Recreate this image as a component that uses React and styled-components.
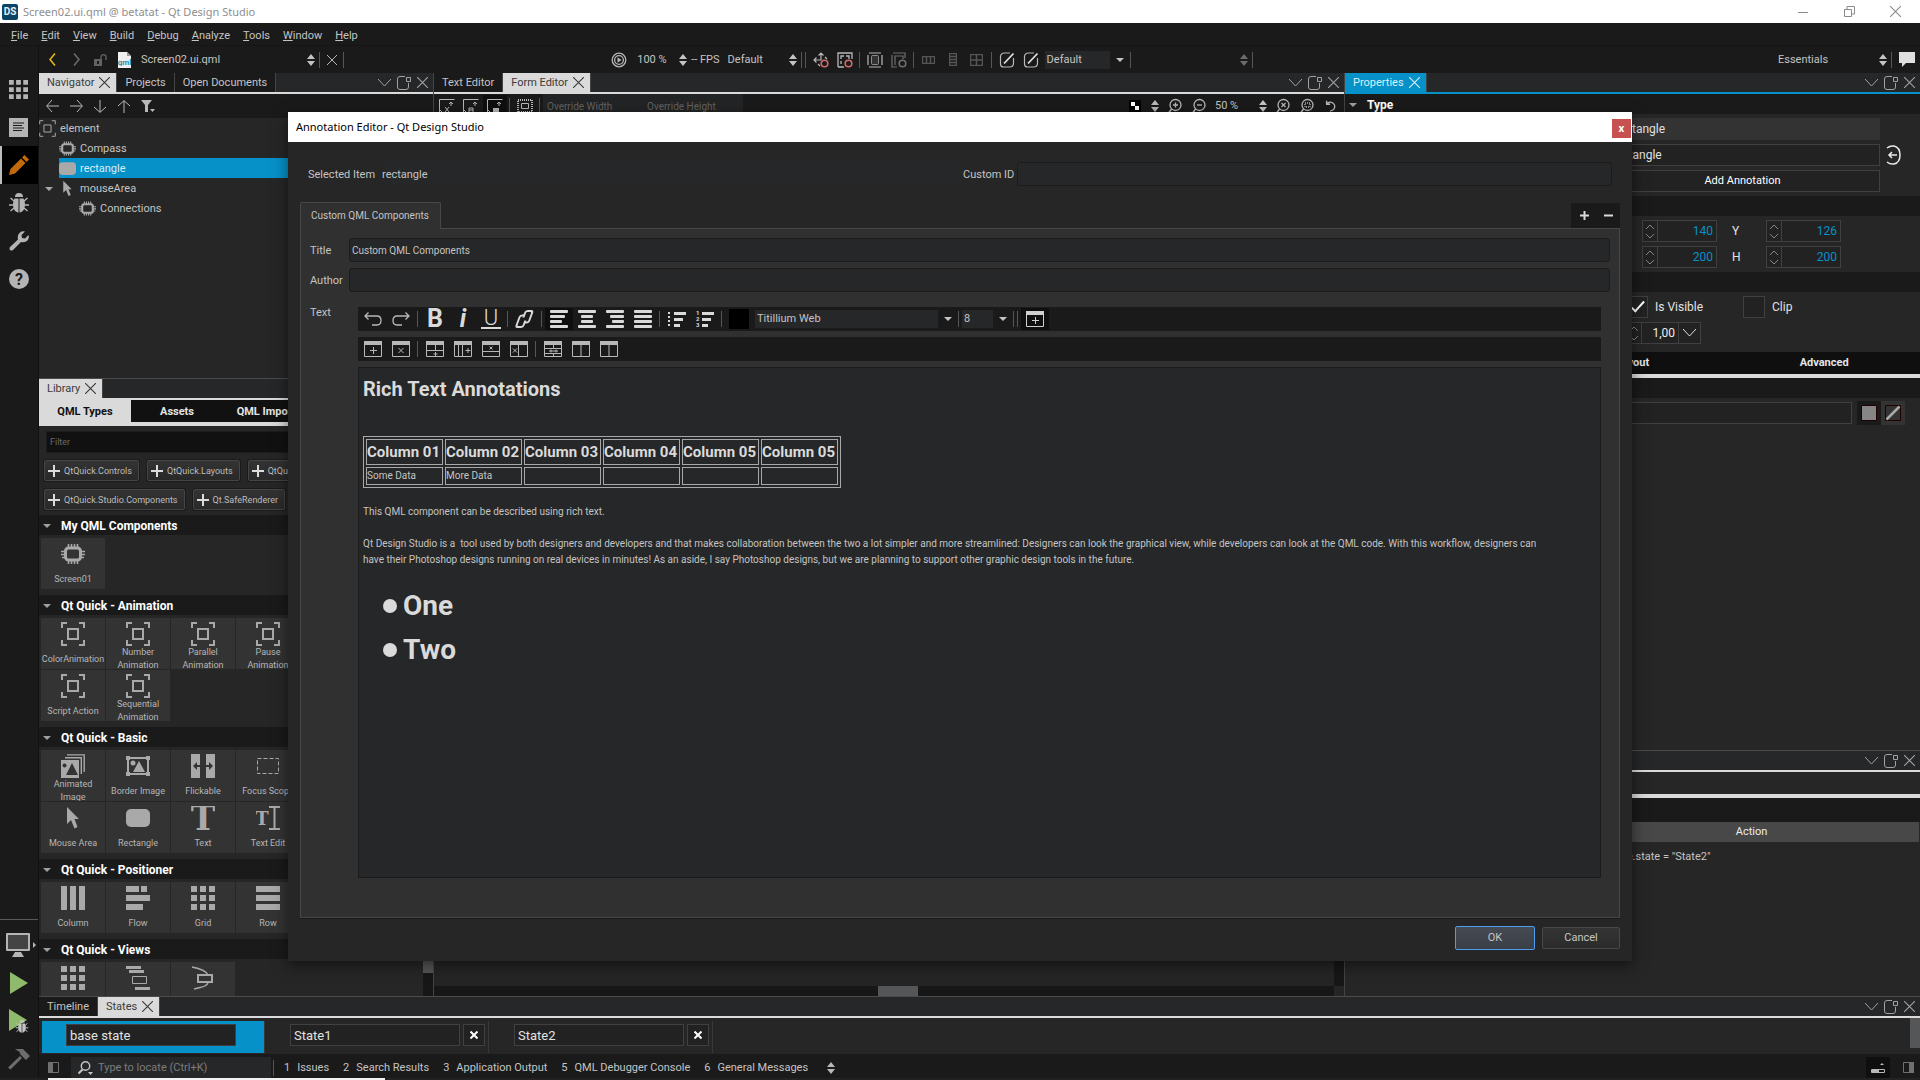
import React from 'react';
import styled, { createGlobalStyle, css } from 'styled-components';

const GlobalStyle = createGlobalStyle`
  :root {
    --panel: #262626;
    --dark: #1a1a1a;
    --bar: #262728;
    --light: #dadada;
    --text: #c4c4c4;
    --icon: #a9a9a9;
    --line: #434445;
    --accent: #0691c9;
  }
  * {
    box-sizing: border-box;
  }
  body {
    margin: 0;
    background: var(--dark);
    color: var(--text);
    font-family: Roboto, sans-serif;
    font-size: 11px;
    line-height: 16px;
  }
  button,
  input,
  select {
    font: inherit;
    color: inherit;
    margin: 0;
    padding: 0;
    border: 0;
    border-radius: 0;
    background: none;
    min-width: 0;
  }
  a {
    color: inherit;
    text-decoration: none;
  }
  svg {
    display: block;
    flex: none;
  }
`;

/* ---------- icons ---------- */

const Icon = ({ size = 16, w, h, box = 16, children, ...rest }) => (
  <svg
    width={w || size}
    height={h || size}
    viewBox={`0 0 ${w ? w : box} ${h ? h : box}`}
    fill="currentColor"
    aria-hidden="true"
    {...rest}
  >
    {children}
  </svg>
);

const Line = ({ d, sw = 1, ...rest }) => (
  <path d={d} fill="none" stroke="currentColor" strokeWidth={sw} {...rest} />
);

const UpDown = () => (
  <Icon w={8} h={12}>
    <path d="M4 0l4 5H0zM4 12l4-5H0z" />
  </Icon>
);
const Down = ({ w = 8 }) => (
  <svg width={w} height={w / 2} viewBox="0 0 8 4" fill="currentColor" aria-hidden="true">
    <path d="M0 0h8L4 4z" />
  </svg>
);
const Cross = ({ size = 10 }) => (
  <Icon size={size} box={10}>
    <Line d="M0 0l10 10M10 0L0 10" />
  </Icon>
);
const ChevronDown = () => (
  <Icon w={13} h={8}>
    <Line d="M0 0l6.500 7L13 0" />
  </Icon>
);
const PopOut = () => (
  <Icon w={14} h={14}>
    <Line d="M8 .5H3Q.5.5.5 3v8q0 2.500 2.500 2.500h6q2.500 0 2.500-2.500V7M9.500 1.500h4v4h-4z" />
  </Icon>
);
const Chip = ({ size = 24 }) => (
  <Icon size={size} box={24}>
    <rect x="4.500" y="6" width="15" height="12" rx="3" fill="none" stroke="currentColor" strokeWidth="3" />
    <Line
      sw={1.600}
      d="M7.500 2v4M10.500 2v4M13.500 2v4M16.500 2v4M7.500 18v4M10.500 18v4M13.500 18v4M16.500 18v4M0 9.500h4M0 12.500h4M1 15.500h3M20 9.500h4M20 12.500h4M20 15.500h3"
    />
  </Icon>
);
const Frame = ({ size = 24, sw = 2 }) => (
  <Icon size={size} box={24}>
    <Line sw={sw} d="M1 6V1h5M18 1h5v5M23 18v5h-5M6 23H1v-5M7 7h10v10H7z" />
  </Icon>
);
const Cursor = ({ size = 24 }) => (
  <Icon size={size} box={24}>
    <path d="M6 1l12 12h-4.500l3 8-3 1.500-3.500-8.500-4 4z" />
  </Icon>
);
const RoundRect = ({ size = 24 }) => (
  <Icon size={size} box={24}>
    <rect y="3" width="24" height="18" rx="5" />
  </Icon>
);
const GridIcon = ({ size = 24 }) => (
  <Icon size={size} box={24}>
    <path d="M0 0h6v6H0zM9 0h6v6H9zM18 0h6v6h-6zM0 9h6v6H0zM9 9h6v6H9zM18 9h6v6h-6zM0 18h6v6H0zM9 18h6v6H9zM18 18h6v6h-6z" />
  </Icon>
);
const AnimatedImage = () => (
  <Icon size={24} box={24}>
    <Line sw={1.400} d="M4 3.700h16.300V20M6 .9h17.200V18" />
    <path fillRule="evenodd" d="M0 6h18v18H0zM3.500 9.500a2 2 0 1 0 .1 0zM11 9l-6 12h12z" />
  </Icon>
);
const BorderImage = () => (
  <Icon size={24} box={24}>
    <Line sw={2} d="M2 4h20v16H2z" />
    <path d="M0 2h4v4H0zM20 2h4v4h-4zM0 18h4v4H0zM20 18h4v4h-4zM7 18l6-11 6 11z" />
    <circle cx="7" cy="9" r="2.500" />
  </Icon>
);
const Flickable = () => (
  <Icon size={24} box={24}>
    <path fillRule="evenodd" d="M0 0h9v24H0zM2 12l4-4v3h3v2H6v3zM15 0h9v24h-9zM22 12l-4-4v3h-3v2h3v3z" />
  </Icon>
);
const FocusScope = () => (
  <Icon size={24} box={24}>
    <rect x="1.500" y="4.500" width="21" height="15" fill="none" stroke="currentColor" strokeDasharray="4 2" />
  </Icon>
);
const TextIcon = () => (
  <Icon size={24} box={24}>
    <text x="12" y="24" textAnchor="middle" fontFamily="DejaVu Serif" fontWeight="700" fontSize="33">T</text>
  </Icon>
);
const TextEditIcon = () => (
  <Icon size={24} box={24}>
    <text x="6" y="19" textAnchor="middle" fontFamily="DejaVu Serif" fontWeight="700" fontSize="18">T</text>
    <Line sw={2} d="M18.500 1v22M13 1h11M13 23h11" />
  </Icon>
);
const ColumnIcon = () => (
  <Icon size={24} box={24}>
    <path d="M0 0h6v24H0zM9 0h6v24H9zM18 0h6v24h-6z" />
  </Icon>
);
const FlowIcon = () => (
  <Icon size={24} box={24}>
    <path d="M0 0h13v6H0zM15 0h6v6h-6zM0 9h24v6H0zM0 18h17v6H0z" />
  </Icon>
);
const RowIcon = () => (
  <Icon size={24} box={24}>
    <path d="M0 0h24v6H0zM0 9h24v6H0zM0 18h24v6H0z" />
  </Icon>
);
const ListViewIcon = () => (
  <Icon size={24} box={24}>
    <path d="M0 0h15v3H0zM3 4h15v3H3zM9 21h15v3H9z" />
    <Line d="M6.500 10.500h14v7h-14z" />
  </Icon>
);
const PathViewIcon = () => (
  <Icon size={24} box={24}>
    <Line sw={1.500} d="M1 1c5 1 14 3 16 8M17 17c-2 4-6 4-10 5l-4 1" />
    <Line sw={2} d="M7 9h14v7H7z" />
  </Icon>
);
const Bug = ({ size = 20 }) => (
  <Icon size={size} box={20}>
    <path d="M6 4a4 4 0 0 1 8 0zM9.500 5.500v14C6 19 4 16 4 11q0-3 1.500-5.500zM10.500 5.500h4Q16 8 16 11c0 5-2 8-5.500 8.500z" />
    <Line sw={1.500} d="M5 8L1.500 5M4 12H0M5 15l-3.500 3M15 8l3.500-3M16 12h4M15 15l3.500 3" />
  </Icon>
);
const BoxButton = ({ children }) => (
  <Icon w={18} h={16}>
    <path d="M0 0h18v4H0z" />
    <Line d="M.5.5h17v15H.5z" />
    {children}
  </Icon>
);
const Lines = ({ rows }) => (
  <Icon w={18} h={20}>
    {rows.map(([x, width], i) => (
      <rect key={i} x={x} y={1 + i * 5} width={width} height="3" rx="1" />
    ))}
  </Icon>
);
const ZoomIcon = ({ d, dash }) => (
  <Icon w={16} h={16}>
    <circle cx="8.500" cy="7" r="5.500" fill="none" stroke="currentColor" strokeWidth="1.300" />
    <Line sw={1.500} d="M4.500 11L2 14.500" />
    <Line sw={1.300} d={d} strokeDasharray={dash} />
  </Icon>
);
const EditBox = () => (
  <Icon size={16}>
    <Line sw={1.200} d="M14.500 6v5q0 4-4 4h-6q-3 0-3-3V5q0-4 4-4H11" />
    <Line sw={1.800} d="M5 11.500L14.500 1.500" stroke="#e0e0e0" />
  </Icon>
);

/* ---------- shell ---------- */

const Page = styled.div`
  position: relative;
  display: flex;
  flex-direction: column;
  height: 100vh;
  overflow: hidden;
`;

const TitleBar = styled.header`
  display: flex;
  align-items: center;
  height: 23px;
  padding: 0 2px;
  gap: 5px;
  background: #fff;
  color: #8e8e8e;
  font: 11px/22px 'Noto Sans', sans-serif;
`;

const AppLogo = styled.span`
  width: 16px;
  height: 16px;
  border-radius: 2px;
  background: #0c4466;
  color: #e4f1f8;
  font: 700 10px/16px Roboto, sans-serif;
  text-align: center;
`;

const WindowButtons = styled.div`
  display: flex;
  align-items: center;
  margin-left: auto;

  button {
    display: flex;
    justify-content: center;
    width: 46px;
    color: #8a8a8a;
  }
`;

const MenuBar = styled.nav`
  display: flex;
  align-items: center;
  gap: 13px;
  height: 23px;
  padding: 3px 11px 0;
  border-bottom: 1px solid #151515;
`;

const Body = styled.div`
  display: flex;
  flex: 1;
  min-height: 0;
`;

const Rail = styled.nav`
  display: flex;
  flex-direction: column;
  width: 39px;
  padding-top: 24px;
  border-right: 1px solid #111;

  hr {
    width: 38px;
    margin: auto 0 6px;
    border: 0;
    border-top: 1px solid #5a5a5a;
  }
`;

const RailButton = styled.button`
  display: flex;
  align-items: center;
  justify-content: center;
  height: 38px;
  padding-right: 1px;
  color: ${(p) => p.$color || '#b4b4b4'};
  ${(p) =>
    p.$active &&
    css`
      background: #000;
      box-shadow: inset 2px 0 #bdbdbd;
    `}
`;

const Work = styled.div`
  display: flex;
  flex-direction: column;
  flex: 1;
  min-width: 0;
`;

const Toolbar = styled.div`
  display: flex;
  align-items: center;
  flex: none;
  height: ${(p) => p.$h || 24}px;
  padding: 0 1px;
  background: var(--dark);
`;

const Spacer = styled.span`
  flex: ${(p) => p.$grow || 1};
`;

const Gap = styled.span`
  flex: none;
  width: ${(p) => p.$w || 15}px;
`;

const ToolButton = styled.button`
  display: flex;
  align-items: center;
  justify-content: center;
  flex: none;
  width: ${(p) => p.$w || 24}px;
  height: 22px;
  color: ${(p) => p.$color || '#b8b8b8'};
  background: ${(p) => (p.$on ? '#0f0f0f' : 'none')};
`;

const ComboBox = styled.span`
  display: flex;
  align-items: center;
  flex: none;
  width: ${(p) => p.$w}px;
  color: ${(p) => p.$color || 'inherit'};

  select {
    flex: 1;
    height: 18px;
    padding-left: ${(p) => p.$pad || 2}px;
    appearance: none;
    outline: 0;
    background: ${(p) => (p.$filled ? '#262728' : 'none')};
  }
  svg {
    margin: 0 ${(p) => (p.$filled ? 6 : 4)}px;
  }
`;

const Sep = styled.span`
  width: 1px;
  height: 16px;
  margin: 0 3px 0 2px;
  background: #565656;

  & + &,
  ${ComboBox} + & {
    margin-left: 0;
  }
`;

const Combo = ({ label, value, arrow, ...rest }) => (
  <ComboBox {...rest}>
    <select aria-label={label} defaultValue={value}>
      <option>{value}</option>
    </select>
    {arrow === 'down' ? <Down /> : <UpDown />}
  </ComboBox>
);

const Docks = styled.main`
  display: grid;
  grid-template-columns: 395px minmax(0, 1fr) 575px;
  flex: 1;
  min-height: 0;
`;

const DockColumn = styled.div`
  display: flex;
  flex-direction: column;
  min-width: 0;
  min-height: 0;
  border-right: 1px solid var(--line);

  &:last-child {
    border-right: 0;
  }
`;

const Panel = styled.section`
  display: flex;
  flex-direction: column;
  flex: ${(p) => p.$grow || 1} 1 0;
  min-height: 0;
  overflow: hidden;
  background: var(--panel);
`;

const DockBarBox = styled.div`
  display: flex;
  flex: none;
  height: ${(p) => (p.$lined ? 22 : 21)}px;
  background: var(--bar);
  border-bottom: 2px solid ${(p) => (p.$accent ? 'var(--accent)' : 'var(--light)')};
  ${(p) => p.$lined && 'border-top: 1px solid #4b4b4b;'}
`;

const DockTab = styled.button`
  display: flex;
  align-items: center;
  gap: 5px;
  padding: 0 8px;
  background: var(--dark);
  border-right: 1px solid var(--line);
  ${(p) =>
    p.$active &&
    css`
      padding-right: 6px;
      color: #3a3a3a;
      background: var(--light);
    `}
  ${(p) =>
    p.$accent &&
    css`
      color: #dceef6;
      background: var(--accent);
    `}
`;

const DockActions = styled.div`
  display: flex;
  align-items: center;
  gap: 6px;
  margin-left: auto;
  padding-right: 5px;

  button {
    color: #a2a2a2;
  }
`;

const DockBar = ({ tabs = [], active, accent, lined }) => (
  <DockBarBox $accent={accent} $lined={lined}>
    {tabs.map((tab) => (
      <DockTab key={tab} $active={tab === active} $accent={accent}>
        {tab}
        {tab === active && <Cross size={11} />}
      </DockTab>
    ))}
    <DockActions>
      <button aria-label="Dock menu"><ChevronDown /></button>
      <button aria-label="Detach"><PopOut /></button>
      <button aria-label="Close"><Cross size={11} /></button>
    </DockActions>
  </DockBarBox>
);

/* ---------- navigator ---------- */

const Tree = styled.ul`
  margin: 0;
  padding: 0;
  list-style: none;
`;

const TreeRow = styled.li`
  display: flex;
  align-items: center;
  gap: 4px;
  height: 20px;
  margin-left: ${(p) => p.$depth * 20}px;
  padding-top: 1px;
  color: ${(p) => (p.$selected ? '#d9edf6' : 'var(--text)')};
  background: ${(p) => (p.$selected ? 'var(--accent)' : 'none')};

  svg {
    color: var(--icon);
  }
`;

const Branch = styled.span`
  display: flex;
  justify-content: center;
  width: 20px;
  margin: 0 -4px 0 -20px;
`;

/* ---------- library ---------- */

const LibraryTabs = styled.div`
  display: flex;
  flex: none;
  height: 26px;
  background: #111;
  border-bottom: 4px solid var(--light);
`;

const LibraryTab = styled.button`
  width: 92px;
  padding-top: 1px;
  font-weight: 700;
  white-space: nowrap;
  color: ${(p) => (p.$active ? '#111' : '#e4e4e4')};
  background: ${(p) => (p.$active ? 'var(--light)' : 'none')};
`;

const LibraryBody = styled.div`
  display: flex;
  flex: 1;
  min-height: 0;
`;

const LibraryScroll = styled.div`
  flex: 1;
  overflow: hidden;
`;

const Filter = styled.input`
  display: block;
  width: calc(100% - 14px);
  height: 22px;
  margin: 5px 7px 7px;
  padding: 0 3px;
  font-size: 9px;
  background: #111;
  border: 1px solid #1c1c1c;

  &::placeholder {
    color: #6a6a6a;
  }
`;

const Chips = styled.div`
  display: flex;
  flex-wrap: wrap;
  gap: 8px;
  margin: 0 5px 5px;
`;

const ImportChip = styled.button`
  display: flex;
  align-items: center;
  gap: 4px;
  height: 21px;
  padding: 0 6px 0 3px;
  font-size: 9px;
  white-space: nowrap;
  color: #bdbdbd;
  background: linear-gradient(#333, #292929);
  border: 1px solid #454545;
  border-radius: 2px;
  box-shadow: 0 0 0 1px #1b1b1b;

  svg {
    color: #dcdcdc;
  }
`;

const SectionHead = styled.h2`
  display: flex;
  align-items: center;
  gap: 10px;
  flex: none;
  height: 20px;
  margin: 0;
  padding: 1px 0 0 4px;
  font-size: 12px;
  font-weight: 700;
  color: #fff;
  background: var(--dark);

  svg {
    color: #a0a0a0;
  }
`;

const Tiles = styled.div`
  display: flex;
  flex-wrap: wrap;
  gap: 1px;
  padding: 3px 0 6px 2px;
`;

const Tile = styled.button`
  display: flex;
  flex-direction: column;
  align-items: center;
  width: 64px;
  height: 51px;
  padding-top: 4px;
  overflow: hidden;
  color: var(--icon);
  background: #333;
`;

const TileLabel = styled.span`
  display: flex;
  align-items: center;
  justify-content: center;
  flex: none;
  height: 26px;
  font-size: 9px;
  line-height: 13px;
  color: #b6b6b6;
`;

const ScrollTrack = styled.div`
  width: 10px;
  background: #171717;

  span {
    display: block;
    width: 10px;
    height: ${(p) => p.$size};
    background: #555657;
  }
`;

/* ---------- form editor ---------- */

const Overrides = styled.div`
  display: flex;
  align-self: stretch;
  background: #232425;

  input {
    width: 100px;
    padding: 2px 4px 0;
    font-size: 10px;
  }
  input::placeholder {
    color: #636363;
  }
`;

const Canvas = styled.div`
  display: grid;
  grid-template: minmax(0, 1fr) 10px / minmax(0, 1fr) 10px;
  flex: 1;
  background: #252525;
`;

const HScroll = styled.div`
  display: flex;
  justify-content: center;
  background: #171717;

  span {
    width: 40px;
    margin-left: 28px;
    background: #555657;
  }
`;

/* ---------- properties ---------- */

const PropBody = styled.div`
  display: flex;
  flex-direction: column;
  gap: 4px;
  padding: 4px ${(p) => p.$right || 18}px 4px 16px;
`;

const PropRow = styled.div`
  display: flex;
  align-items: center;
  height: 22px;
  padding-left: ${(p) => p.$indent || 0}px;
  font-size: 12px;
  color: #e2e2e2;

  label {
    flex: none;
    width: ${(p) => p.$label || 14}px;
  }
`;

const field = css`
  height: 22px;
  border: 1px solid #404040;
  background: #222;
`;

const PropInput = styled.input`
  ${field}
  flex: 1;
  padding: 0 6px;
  ${(p) => p.$plain && 'background: #333; border-color: #333;'}
`;

const PropButton = styled.button`
  ${field}
  flex: 1;
  font-size: 11px;
  color: #fff;
`;

const ExportButton = styled.button`
  flex: none;
  width: 18px;
  margin-left: 4px;
  color: #ececec;
`;

const SpinBox = styled.span`
  ${field}
  display: flex;
  flex: none;
  width: 75px;

  span {
    display: flex;
    flex-direction: column;
    align-items: center;
    justify-content: space-around;
    width: 15px;
    color: #8a8289;
    border-right: 1px solid #404040;
  }
  input {
    flex: 1;
    padding-right: 3px;
    text-align: right;
    color: ${(p) => (p.$white ? '#eee' : 'var(--accent)')};
  }
  > button {
    width: 22px;
    padding-left: 4px;
    border-left: 1px solid #404040;
  }
`;

const Spin = ({ id, value, label, white, children }) => (
  <SpinBox $white={white}>
    <span>
      <Icon w={8} h={5}><Line d="M0 5l4-4 4 4" /></Icon>
      <Icon w={8} h={5}><Line d="M0 0l4 4 4-4" /></Icon>
    </span>
    <input id={id} aria-label={label} defaultValue={value} inputMode="numeric" />
    {children}
  </SpinBox>
);

const Check = styled.input`
  ${field}
  display: grid;
  place-items: center;
  flex: none;
  width: 22px;
  margin-right: 7px;
  appearance: none;

  &:checked::after {
    content: '';
    width: 5px;
    height: 12px;
    margin-bottom: 4px;
    border: solid #fff;
    border-width: 0 2px 2px 0;
    transform: rotate(42deg);
  }
`;

const PropTabs = styled.div`
  display: grid;
  grid-template-columns: repeat(3, 1fr);
  height: 26px;
  margin-top: 4px;
  background: #0f0f0f;
  border-bottom: 4px solid var(--light);

  button {
    font-weight: 700;
    color: #e4e4e4;
  }
`;

const TabStrip = styled.div`
  flex: none;
  height: 26px;
  border-bottom: 4px solid var(--light);
`;

const Band = styled.div`
  flex: none;
  height: ${(p) => p.$h || 20}px;
  background: var(--dark);
`;

const FillToggle = styled.span`
  display: flex;
  width: 48px;
  height: 24px;
  background: #333;

  button {
    display: flex;
    align-items: center;
    justify-content: center;
    width: 24px;
  }
  button:first-child {
    background: #1a1a1a;
  }
`;

const Actions = styled.table`
  width: calc(100% - 1px);
  border-collapse: collapse;
  table-layout: fixed;

  th {
    height: 20px;
    padding: 0;
    font-weight: 400;
    color: #eee;
    background: #484848;
  }
  td {
    height: 30px;
    padding: 0 3px;
  }
`;

/* ---------- states and status ---------- */

const StateList = styled.div`
  display: flex;
  gap: 2px;
  flex: none;
  height: 36px;
  padding: 3px 0 1px 3px;
  background: var(--panel);
`;

const StateCell = styled.div`
  display: flex;
  gap: 3px;
  width: 222px;
  padding: 3px 0 0 24px;
  background: ${(p) => (p.$active ? 'var(--accent)' : 'none')};
  box-shadow: 1px 0 #393939;

  input {
    ${field}
    width: 170px;
    padding: 0 3px;
    font-size: 13px;
    color: #e2e2e2;
  }
  button {
    ${field}
    display: flex;
    align-items: center;
    justify-content: center;
    width: 22px;
    color: #fff;
  }
`;

const StateScroll = styled.div`
  width: 10px;
  height: 30px;
  margin: -3px 0 0 auto;
  background: #555657;
`;

const StatusBar = styled.footer`
  display: flex;
  align-items: center;
  flex: none;
  height: 24px;
  padding-top: 3px;
  background: var(--dark);
`;

const Locator = styled.label`
  display: flex;
  align-items: center;
  gap: 5px;
  align-self: flex-end;
  width: 200px;
  height: 21px;
  padding-left: 7px;
  background: #262728;

  input {
    flex: 1;
  }
  input::placeholder {
    color: #7c7c7c;
  }
`;

const Output = styled.button`
  margin-left: ${(p) => p.$gap || 14}px;
  white-space: nowrap;

  b {
    margin-right: 7px;
    font-weight: 400;
  }
`;

const TaskEdge = styled.div`
  flex: none;
  height: 2px;
  padding-left: 48px;
  background: #222;

  span {
    display: block;
    width: 18%;
    height: 2px;
    background: #f2f2f2;
  }
`;

/* ---------- annotation dialog ---------- */

const Dialog = styled.section`
  position: absolute;
  inset: 112px 15% 119px;
  display: flex;
  flex-direction: column;
  background: var(--panel);
  box-shadow: 0 4px 14px rgba(0, 0, 0, 0.5);
`;

const DialogTitle = styled.header`
  display: flex;
  align-items: center;
  justify-content: space-between;
  flex: none;
  height: 30px;
  padding: 0 1px 0 8px;
  color: #000;
  background: #fff;

  h1 {
    margin: 0;
    font: 11px/16px 'Noto Sans', sans-serif;
  }
  button {
    width: 19px;
    height: 19px;
    margin-top: 3px;
    color: #fff;
    background: #c75050;
    font: 700 10px/17px 'Open Sans', sans-serif;
  }
`;

const DialogBody = styled.div`
  display: flex;
  flex-direction: column;
  flex: 1;
  min-height: 0;
  padding: 20px 12px 11px;
`;

const IdRow = styled.div`
  display: grid;
  grid-template-columns: 74px minmax(0, 581px) 54px minmax(0, 595px);
  align-items: center;
  padding: 0 8px;
  margin-bottom: 16px;
`;

const FieldLabel = styled.label`
  padding-top: 1px;
`;

const EditField = styled.input`
  width: 100%;
  height: 24px;
  padding: 0 2px;
  font-size: 10px;
  background: #262728;
  border: 1px solid #1c1c1c;
  border-radius: 3px;
  ${(p) =>
    p.readOnly &&
    css`
      padding: 1px 0 0;
      font-size: 11px;
      border: 0;
    `}
`;

const TabRow = styled.div`
  display: flex;
  align-items: flex-end;
  justify-content: space-between;
  height: 26px;
`;

const PageTab = styled.button`
  position: relative;
  height: 27px;
  margin-bottom: -1px;
  padding: 0 11px 0 10px;
  font-size: 10px;
  background: #303030;
  border: 1px solid #474747;
  border-bottom: 0;
  border-radius: 2px 2px 0 0;
`;

const PageButtons = styled.div`
  display: flex;
  align-items: center;
  height: 25px;
  padding-left: 1px;
  background: var(--dark);
`;

const TabPage = styled.div`
  display: grid;
  grid-template-columns: 39px minmax(0, 1fr);
  grid-template-rows: 24px 24px minmax(0, 1fr);
  row-gap: 6px;
  align-items: center;
  flex: 1;
  min-height: 0;
  padding: 9px;
  background: #303030;
  border: 1px solid #474747;
  box-shadow: 0 1px #181818;
`;

const TextLabel = styled.span`
  align-self: start;
  padding-top: 7px;
`;

const RichText = styled.div`
  display: flex;
  flex-direction: column;
  gap: 6px;
  align-self: stretch;
  padding: 9px 9px 30px;
`;

const Letter = styled.span`
  font-size: 25px;
  line-height: 22px;
  color: var(--light);
  font-weight: 700;
  font-style: ${(p) => p.$slant || 'normal'};
`;

const Underlined = styled.span`
  width: 20px;
  border-bottom: 2px solid var(--light);
  font-size: 22px;
  line-height: 18px;
  font-weight: 300;
  color: var(--light);
`;

const Swatch = styled.span`
  width: 20px;
  height: 20px;
  background: #000;
`;

const Document = styled.article`
  flex: 1;
  padding: 7px 4px;
  overflow: hidden;
  background: #262728;
  border: 1px solid #1b1b1b;
  font-size: 10px;

  h2 {
    margin: 0 0 33px;
    font-size: 20px;
    line-height: 28px;
    color: var(--light);
  }
  p {
    margin: 16px 44px 16px 0;
  }
  ul {
    margin: 16px 0 0;
    padding: 0;
    list-style: none;
  }
  li {
    display: flex;
    align-items: center;
    gap: 6px;
    padding-left: 20px;
    font-size: 28px;
    font-weight: 700;
    line-height: 44px;
    color: var(--light);
  }
  li::before {
    content: '';
    width: 14px;
    height: 14px;
    border-radius: 50%;
    background: var(--light);
  }
`;

const DataTable = styled.table`
  border: 1px solid #a8a8a8;
  border-spacing: 2px;

  th,
  td {
    width: 77px;
    height: 18px;
    padding: 0;
    border: 1px solid #a8a8a8;
    line-height: 16px;
    text-align: left;
    white-space: nowrap;
  }
  th {
    height: 26px;
    font-size: 15px;
    color: var(--light);
  }
`;

const DialogFooter = styled.footer`
  display: flex;
  align-items: center;
  justify-content: flex-end;
  gap: 7px;
  padding-top: 8px;
`;

const DialogButton = styled.button`
  width: ${(p) => (p.$primary ? 80 : 78)}px;
  height: ${(p) => (p.$primary ? 24 : 22)}px;
  color: #c6c6c6;
  background: ${(p) => (p.$primary ? 'linear-gradient(#454a53, #3a3f47)' : 'linear-gradient(#343434, #2b2b2b)')};
  border: 1px solid ${(p) => (p.$primary ? '#4c9df0' : '#484848')};
  border-radius: 2px;
`;

/* ---------- data ---------- */

const menus = ['File', 'Edit', 'View', 'Build', 'Debug', 'Analyze', 'Tools', 'Window', 'Help'];

const imports = ['QtQuick.Controls', 'QtQuick.Layouts', 'QtQuick.Extras', 'QtQuick.Studio.Components', 'Qt.SafeRenderer'];

const library = [
  ['My QML Components', [['Screen01', Chip]]],
  [
    'Qt Quick - Animation',
    [
      ['ColorAnimation', Frame],
      ['Number Animation', Frame],
      ['Parallel Animation', Frame],
      ['Pause Animation', Frame],
      ['Property Animation', Frame],
      ['Script Action', Frame],
      ['Sequential Animation', Frame],
    ],
  ],
  [
    'Qt Quick - Basic',
    [
      ['Animated Image', AnimatedImage],
      ['Border Image', BorderImage],
      ['Flickable', Flickable],
      ['Focus Scope', FocusScope],
      ['Image', BorderImage],
      ['Mouse Area', Cursor],
      ['Rectangle', RoundRect],
      ['Text', TextIcon],
      ['Text Edit', TextEditIcon],
    ],
  ],
  [
    'Qt Quick - Positioner',
    [
      ['Column', ColumnIcon],
      ['Flow', FlowIcon],
      ['Grid', GridIcon],
      ['Row', RowIcon],
    ],
  ],
  [
    'Qt Quick - Views',
    [
      ['Grid View', GridIcon, true],
      ['List View', ListViewIcon, true],
      ['Path View', PathViewIcon, true],
    ],
  ],
];

const outputs = [
  [1, 'Issues'],
  [2, 'Search Results'],
  [3, 'Application Output'],
  [5, 'QML Debugger Console'],
  [6, 'General Messages'],
];

const columns = ['Column 01', 'Column 02', 'Column 03', 'Column 04', 'Column 05', 'Column 05'];

const alignments = [
  ['Align left', [[0, 18], [0, 15], [0, 12], [0, 18]]],
  ['Center', [[0, 18], [3, 12], [3, 12], [0, 18]]],
  ['Align right', [[0, 18], [4, 14], [6, 12], [0, 18]]],
  ['Justify', [[0, 18], [0, 18], [0, 18], [0, 18]]],
];

const tableTools = [
  ['Insert row', 'M0 9.500h18M9.500 4v5M9.500 11v4M7.500 13h4'],
  ['Insert column', 'M4.500 4v12M8.500 4v12M11.500 9.500h5M14 7v5'],
  ['Remove row', 'M0 10.500h18M7.500 5.500l3 3M10.500 5.500l-3 3'],
  ['Remove column', 'M8.500 4v12M3 7.500l4 4M7 7.500l-4 4'],
];

const mergeTools = [
  ['Merge cells', 'M0 7.500h18M0 12.500h18M9.500 4v4M9.500 12v4M5 10h9M7 8.500v3M12 8.500v3'],
  ['Split row', 'M9 4v12'],
  ['Split column', 'M9 4v12'],
];

/* ---------- parts ---------- */

function MainToolbar() {
  return (
    <Toolbar $h={27}>
      <ToolButton aria-label="Back" $color="#e8bc1c">
        <Icon w={7} h={13}><Line sw={1.500} d="M6 .5l-5 6 5 6" /></Icon>
      </ToolButton>
      <ToolButton aria-label="Forward" $color="#6c6c6c">
        <Icon w={7} h={13}><Line sw={1.500} d="M1 .5l5 6-5 6" /></Icon>
      </ToolButton>
      <ToolButton aria-label="Unlocked" $color="#636363">
        <Icon w={13} h={12}>
          <path fillRule="evenodd" d="M0 5h8v7H0zM3 7v3h2V7z" />
          <Line sw={1.300} d="M7 6V3q0-2.300 2.500-2.300T12 3v3" />
        </Icon>
      </ToolButton>
      <ToolButton aria-label="QML file">
        <Icon w={15} h={16}>
          <path d="M1 0h9l4 4v12H1z" fill="#f0f0f0" />
          <path d="M10 0v4h4z" fill="#9a9a9a" />
          <text x="7.500" y="13" textAnchor="middle" fontSize="8" fontWeight="700" fill="#1a8fa8">qml</text>
        </Icon>
      </ToolButton>
      <Combo label="Open document" value="Screen02.ui.qml" $w={183} $pad={5} />
      <Sep />
      <ToolButton aria-label="Close document" $w={18}><Cross /></ToolButton>
      <Sep />
      <Spacer />
      <ToolButton aria-label="Run preview">
        <Icon size={16}>
          <circle cx="8" cy="8" r="6.800" fill="none" stroke="currentColor" strokeWidth="1.300" />
          <circle cx="8" cy="8" r="4.400" fill="none" stroke="currentColor" strokeWidth="1.300" />
          <path d="M6.500 5.200L10.500 8l-4 2.800z" />
        </Icon>
      </ToolButton>
      <Combo label="Preview size" value="100 %" $w={60} $pad={6} />
      <span>-- FPS</span>
      <Combo label="Language" value="Default" $w={81} $pad={8} />
      <Sep />
      <Sep />
      <ToolButton aria-label="Reset position">
        <Icon size={16}>
          <Line sw={1.200} d="M8 1v7M1 8h7M5.500 3.500L8 1l2.500 2.500M3.500 5.500L1 8l2.500 2.500M7 14l-2-2M12 5l2 2" />
          <circle cx="11.500" cy="11.500" r="3.300" fill="none" stroke="#d46a6a" strokeWidth="1.600" />
        </Icon>
      </ToolButton>
      <ToolButton aria-label="Reset size">
        <Icon size={16}>
          <Line sw={1.300} d="M1 15V1h14v6M1 15h6M4 7V4h3M9 4h3v3M4 9v3" />
          <circle cx="11.500" cy="11.500" r="3.300" fill="none" stroke="#d46a6a" strokeWidth="1.600" />
        </Icon>
      </ToolButton>
      <Sep />
      <ToolButton aria-label="Fill parent">
        <Icon size={16}>
          <Line sw={1.200} d="M2 1h12M2 15h12M1 3v10M15 3v10" />
          <rect x="4.500" y="3.500" width="7" height="9" rx="1" fill="#333" stroke="#8e8e8e" />
        </Icon>
      </ToolButton>
      <ToolButton aria-label="Reset anchors" $color="#6f6f6f">
        <Icon size={16}>
          <Line sw={1.200} d="M2 1h12v5M1 3v12h5M4 13V4h8v3" />
          <circle cx="11.500" cy="11.500" r="3.300" fill="none" stroke="currentColor" strokeWidth="1.600" />
        </Icon>
      </ToolButton>
      <Sep />
      <ToolButton aria-label="Row layout" $color="#555">
        <Icon w={13} h={8}><Line d="M.5.5h12v7H.5zM4.500 0v8M8.500 0v8" sw={1.500} /></Icon>
      </ToolButton>
      <ToolButton aria-label="Column layout" $color="#555">
        <Icon w={8} h={13}><Line d="M.5.5h7v12h-7zM0 3.500h8M0 6.500h8M0 9.500h8" sw={1.500} /></Icon>
      </ToolButton>
      <ToolButton aria-label="Grid layout" $color="#555">
        <Icon w={13} h={12}><Line d="M.5.5h12v11H.5zM6.500 0v12M0 6h13" sw={1.500} /></Icon>
      </ToolButton>
      <Sep />
      <ToolButton aria-label="Edit style"><EditBox /></ToolButton>
      <ToolButton aria-label="Edit theme"><EditBox /></ToolButton>
      <Gap $w={2} />
      <Combo label="Style" value="Default" arrow="down" $filled $w={85} />
      <Sep />
      <Combo label="Backend" value="" $w={118} $color="#6c6c6c" />
      <Sep />
      <Spacer $grow={2} />
      <Combo label="Workspace" value="Essentials" $w={115} />
      <Sep />
      <ToolButton aria-label="Feedback" $color="#e0e0e0">
        <Icon w={16} h={15}><path d="M0 0h16v11H7l-4 4v-4H0z" /></Icon>
      </ToolButton>
    </Toolbar>
  );
}

function Navigator() {
  return (
    <Panel $grow={305}>
      <DockBar tabs={['Navigator', 'Projects', 'Open Documents']} active="Navigator" />
      <Toolbar>
        <ToolButton aria-label="Move left"><Icon w={13} h={12}><Line d="M6 0L.7 6 6 12M.7 6H13" /></Icon></ToolButton>
        <ToolButton aria-label="Move right"><Icon w={13} h={12}><Line d="M7 0l5.300 6L7 12M12.300 6H0" /></Icon></ToolButton>
        <ToolButton aria-label="Move down"><Icon w={12} h={13}><Line d="M0 7l6 5.300L12 7M6 12.300V0" /></Icon></ToolButton>
        <ToolButton aria-label="Move up"><Icon w={12} h={13}><Line d="M0 6L6 .7 12 6M6 .7V13" /></Icon></ToolButton>
        <ToolButton aria-label="Filter tree">
          <Icon w={14} h={12}><path d="M0 0h11L7 5v7H4V5zM9 9h5l-2.500 3z" /></Icon>
        </ToolButton>
      </Toolbar>
      <Tree>
        <TreeRow $depth={0}><Frame size={17} sw={1.400} />element</TreeRow>
        <TreeRow $depth={1}><Chip size={17} />Compass</TreeRow>
        <TreeRow $depth={1} $selected><RoundRect size={17} />rectangle</TreeRow>
        <TreeRow $depth={1}><Branch><Down /></Branch><Cursor size={17} />mouseArea</TreeRow>
        <TreeRow $depth={2}><Chip size={17} />Connections</TreeRow>
      </Tree>
    </Panel>
  );
}

function Library() {
  return (
    <Panel $grow={618}>
      <DockBar tabs={['Library']} active="Library" lined />
      <LibraryTabs>
        <LibraryTab $active>QML Types</LibraryTab>
        <LibraryTab>Assets</LibraryTab>
        <LibraryTab>QML Imports</LibraryTab>
      </LibraryTabs>
      <LibraryBody>
        <LibraryScroll>
          <Filter placeholder="Filter" aria-label="Filter" />
          <Chips>
            {imports.map((name) => (
              <ImportChip key={name}>
                <Icon w={12} h={12}><path d="M5 0h2v5h5v2H7v5H5V7H0V5h5z" /></Icon>
                {name}
              </ImportChip>
            ))}
          </Chips>
          {library.map(([title, items]) => (
            <React.Fragment key={title}>
              <SectionHead><Down />{title}</SectionHead>
              <Tiles>
                {items.map(([name, Glyph, iconOnly]) => (
                  <Tile key={name} aria-label={name}>
                    <Glyph />
                    {!iconOnly && <TileLabel>{name}</TileLabel>}
                  </Tile>
                ))}
              </Tiles>
            </React.Fragment>
          ))}
        </LibraryScroll>
        <ScrollTrack $size="96%"><span /></ScrollTrack>
      </LibraryBody>
    </Panel>
  );
}

function FormEditor() {
  const corner = 'M.5 15V1.500h15M12 4v4M10 6l2-2 2 2M3 14l-2-2';
  return (
    <Panel>
      <DockBar tabs={['Text Editor', 'Form Editor']} active="Form Editor" />
      <Toolbar>
        <ToolButton aria-label="No snapping"><Icon size={16}><Line d={corner} /><Line d="M6 9l4 5M10 9l-4 5" /></Icon></ToolButton>
        <ToolButton aria-label="Snap with anchors"><Icon size={16}><Line d={corner} /><Line d="M6 15v-5h4v5M6 12h4" /></Icon></ToolButton>
        <ToolButton aria-label="Snap" $on><Icon size={16}><Line d={corner} /><path d="M6 10h6v6H6z" /></Icon></ToolButton>
        <Sep />
        <ToolButton aria-label="Show bounds">
          <Icon size={16}>
            <rect x="1" y="2" width="14" height="12" fill="none" stroke="currentColor" strokeWidth="2" strokeDasharray="1 1" />
            <Line d="M4.500 5.500h7v5h-7z" />
          </Icon>
        </ToolButton>
        <Sep />
        <Overrides>
          <input placeholder="Override Width" aria-label="Override Width" />
          <input placeholder="Override Height" aria-label="Override Height" />
        </Overrides>
        <Spacer />
        <ToolButton aria-label="Background">
          <Icon w={12} h={12}>
            <path d="M0 0h12v12H0z" fill="#000" />
            <path d="M2 2h4v4H2zM6 6h4v4H6z" fill="#fff" />
          </Icon>
        </ToolButton>
        <ToolButton aria-label="Choose background" $w={16}><UpDown /></ToolButton>
        <ToolButton aria-label="Zoom in"><ZoomIcon d="M8.500 4.500v5M6 7h5" /></ToolButton>
        <ToolButton aria-label="Zoom out"><ZoomIcon d="M6 7h5" /></ToolButton>
        <Combo label="Zoom" value="50 %" $w={60} $pad={4} />
        <ToolButton aria-label="Fit all"><ZoomIcon d="M6.500 5l4 4M10.500 5l-4 4" /></ToolButton>
        <ToolButton aria-label="Fit selection"><ZoomIcon d="M6 5h5v4H6z" dash="1 1" /></ToolButton>
        <ToolButton aria-label="Reset view">
          <Icon size={14}><Line sw={1.500} d="M3 2v4h4M3 6q3-4 7-1.500T11 12l-4 2" /></Icon>
        </ToolButton>
      </Toolbar>
      <Canvas>
        <span />
        <ScrollTrack />
        <HScroll><span /></HScroll>
      </Canvas>
    </Panel>
  );
}

function Properties() {
  return (
    <Panel $grow={677}>
      <DockBar tabs={['Properties']} active="Properties" accent />
      <SectionHead><Down />Type</SectionHead>
      <PropBody>
        <PropRow $label={244}>
          <label htmlFor="type">Type</label>
          <PropInput id="type" defaultValue="Rectangle" readOnly $plain />
          <Gap $w={22} />
        </PropRow>
        <PropRow $label={244}>
          <label htmlFor="id">id</label>
          <PropInput id="id" defaultValue="rectangle" />
          <ExportButton aria-label="Export as alias">
            <Icon w={18} h={20}>
              <Line sw={1.500} d="M3 3q3-2.500 7-2 6 1.500 6 9t-6 9q-4 .5-7-2M13 10H5M8 7l-3 3 3 3" />
            </Icon>
          </ExportButton>
        </PropRow>
        <PropRow $indent={244}>
          <PropButton>Add Annotation</PropButton>
          <Gap $w={22} />
        </PropRow>
      </PropBody>
      <Band />
      <PropBody>
        <PropRow $indent={281} $label={34}>
          <Spin label="X" value="140" />
          <Gap />
          <label htmlFor="y">Y</label>
          <Spin id="y" value="126" />
        </PropRow>
        <PropRow $indent={281} $label={34}>
          <Spin label="W" value="200" />
          <Gap />
          <label htmlFor="h">H</label>
          <Spin id="h" value="200" />
        </PropRow>
      </PropBody>
      <Band />
      <PropBody>
        <PropRow $indent={265} $label={88}>
          <Check type="checkbox" id="visible" defaultChecked />
          <label htmlFor="visible">Is Visible</label>
          <Check type="checkbox" id="clip" />
          <label htmlFor="clip">Clip</label>
        </PropRow>
        <PropRow $indent={265}>
          <Spin label="Opacity" value="1,00" white>
            <button aria-label="Opacity slider"><ChevronDown /></button>
          </Spin>
        </PropRow>
      </PropBody>
      <PropTabs>
        <button>Rectangle</button>
        <button>Layout</button>
        <button>Advanced</button>
      </PropTabs>
      <Band />
      <PropBody $right={15}>
        <PropRow $label={195}>
          <label htmlFor="color">Color</label>
          <PropInput id="color" />
          <Gap $w={5} />
          <FillToggle>
            <button aria-label="Solid colour">
              <Icon size={16}><path d="M.5.5h15v15H.5z" fill="#868686" stroke="#200" /></Icon>
            </button>
            <button aria-label="No colour">
              <Icon size={16}>
                <path d="M.5.5h15v15H.5z" fill="#333" stroke="#200" />
                <Line sw={2.500} d="M1.500 14.500l13-13" stroke="#aaa" />
              </Icon>
            </button>
          </FillToggle>
        </PropRow>
      </PropBody>
    </Panel>
  );
}

function Connections() {
  return (
    <Panel $grow={246}>
      <DockBar lined />
      <TabStrip />
      <Band $h={24} />
      <Actions>
        <colgroup>
          <col width="239" />
          <col />
        </colgroup>
        <thead>
          <tr>
            <th>Target</th>
            <th>Action</th>
          </tr>
        </thead>
        <tbody>
          <tr>
            <td>mouseArea</td>
            <td>rectangle.state = "State2"</td>
          </tr>
        </tbody>
      </Actions>
    </Panel>
  );
}

function AnnotationDialog() {
  return (
    <Dialog role="dialog" aria-label="Annotation Editor">
      <DialogTitle>
        <h1>Annotation Editor - Qt Design Studio</h1>
        <button aria-label="Close dialog">x</button>
      </DialogTitle>
      <DialogBody>
        <IdRow>
          <FieldLabel htmlFor="selected">Selected Item</FieldLabel>
          <EditField id="selected" defaultValue="rectangle" readOnly />
          <FieldLabel htmlFor="custom-id">Custom ID</FieldLabel>
          <EditField id="custom-id" />
        </IdRow>
        <TabRow>
          <PageTab>Custom QML Components</PageTab>
          <PageButtons>
            <ToolButton aria-label="Add page" $color="#dadada">
              <Icon w={9} h={9}><path d="M3.500 0h2v3.500H9v2H5.500V9h-2V5.500H0v-2h3.500z" /></Icon>
            </ToolButton>
            <ToolButton aria-label="Remove page" $color="#dadada">
              <Icon w={9} h={9}><path d="M0 3.500h9v2H0z" /></Icon>
            </ToolButton>
          </PageButtons>
        </TabRow>
        <TabPage>
          <FieldLabel htmlFor="title">Title</FieldLabel>
          <EditField id="title" defaultValue="Custom QML Components" />
          <FieldLabel htmlFor="author">Author</FieldLabel>
          <EditField id="author" />
          <TextLabel>Text</TextLabel>
          <RichText>
            <Toolbar>
              <ToolButton $w={28} aria-label="Undo">
                <Icon w={18} h={14}><Line sw={1.300} d="M4.500.5L1 4l3.500 3.500M1 4h12q4 0 4 4.500T13 13H8" /></Icon>
              </ToolButton>
              <ToolButton $w={28} aria-label="Redo">
                <Icon w={18} h={14}><Line sw={1.300} d="M13.500.5L17 4l-3.500 3.500M17 4H5Q1 4 1 8.500T5 13h5" /></Icon>
              </ToolButton>
              <Sep />
              <ToolButton $w={28} aria-label="Bold"><Letter>B</Letter></ToolButton>
              <ToolButton $w={28} aria-label="Italic"><Letter $slant="italic">i</Letter></ToolButton>
              <ToolButton $w={28} aria-label="Underline"><Underlined>U</Underlined></ToolButton>
              <Sep />
              <ToolButton $w={28} aria-label="Link" $color="#dadada">
                <Icon w={20} h={20}>
                  <g transform="translate(3 0) skewX(-20)">
                    <Line sw={2} d="M8.500 6.500H6.500q-2 0-2 2V16q0 2 2 2h3q2 0 2-2v-4.500" />
                    <Line sw={2} d="M11.500 13.500h2q2 0 2-2V4q0-2-2-2h-3q-2 0-2 2v4.500" />
                  </g>
                </Icon>
              </ToolButton>
              <Sep />
              {alignments.map(([name, rows], i) => (
                <ToolButton key={name} $w={28} aria-label={name} $on={i === 0} $color="#dadada">
                  <Lines rows={rows} />
                </ToolButton>
              ))}
              <Sep />
              <ToolButton $w={28} aria-label="Bullet list" $color="#dadada">
                <Icon w={18} h={16}>
                  <path d="M6 1h12v3H6zM6 7h9v3H6zM6 13h6v3H6zM0 1h2v2H0zM0 5h2v2H0zM0 9h2v2H0zM0 13h2v2H0z" />
                </Icon>
              </ToolButton>
              <ToolButton $w={28} aria-label="Numbered list" $color="#dadada">
                <Icon w={18} h={16}>
                  <path d="M6 1h12v3H6zM6 7h9v3H6zM6 13h6v3H6z" />
                  <text fontSize="6" fontWeight="700"><tspan x="0" y="4">1</tspan><tspan x="0" y="10">2</tspan><tspan x="0" y="16">3</tspan></text>
                </Icon>
              </ToolButton>
              <Sep />
              <ToolButton $w={28} aria-label="Text colour"><Swatch /></ToolButton>
              <Gap $w={2} />
              <Combo label="Font" value="Titillium Web" arrow="down" $filled $w={203} />
              <Sep />
              <Combo label="Font size" value="8" arrow="down" $filled $w={51} />
              <Sep />
              <Sep />
              <ToolButton $w={28} aria-label="Table tools" $on $color="#cfcfcf">
                <BoxButton><Line d="M9.500 6v7M6 9.500h7" /></BoxButton>
              </ToolButton>
            </Toolbar>
            <Toolbar>
              <ToolButton $w={28} aria-label="Create table"><BoxButton><Line d="M9.500 6v7M6 9.500h7" /></BoxButton></ToolButton>
              <ToolButton $w={28} aria-label="Remove table"><BoxButton><Line d="M6.500 7l5 5M11.500 7l-5 5" /></BoxButton></ToolButton>
              <Sep />
              {tableTools.map(([name, d]) => (
                <ToolButton key={name} $w={28} aria-label={name}><BoxButton><Line d={d} /></BoxButton></ToolButton>
              ))}
              <Sep />
              {mergeTools.map(([name, d]) => (
                <ToolButton key={name} $w={28} aria-label={name}><BoxButton><Line d={d} /></BoxButton></ToolButton>
              ))}
            </Toolbar>
            <Document>
              <h2>Rich Text Annotations</h2>
              <DataTable>
                <thead>
                  <tr>{columns.map((name, i) => <th key={i}>{name}</th>)}</tr>
                </thead>
                <tbody>
                  <tr>
                    <td>Some Data</td>
                    <td>More Data</td>
                    <td />
                    <td />
                    <td />
                    <td />
                  </tr>
                </tbody>
              </DataTable>
              <p>This QML component can be described using rich text.</p>
              <p>
                Qt Design Studio is a&nbsp; tool used by both designers and developers and that makes collaboration
                between the two a lot simpler and more streamlined: Designers can look the graphical view, while
                developers can look at the QML code. With this workflow, designers can have their Photoshop designs
                running on real devices in minutes! As an aside, I say Photoshop designs, but we are planning to support
                other graphic design tools in the future.
              </p>
              <ul>
                <li>One</li>
                <li>Two</li>
              </ul>
            </Document>
          </RichText>
        </TabPage>
        <DialogFooter>
          <DialogButton $primary>OK</DialogButton>
          <DialogButton>Cancel</DialogButton>
        </DialogFooter>
      </DialogBody>
    </Dialog>
  );
}

export default function App() {
  return (
    <Page>
      <GlobalStyle />
      <TitleBar>
        <AppLogo>DS</AppLogo>
        Screen02.ui.qml @ betatat - Qt Design Studio
        <WindowButtons>
          <button aria-label="Minimize"><Icon w={10} h={10}><Line d="M0 5.500h10" /></Icon></button>
          <button aria-label="Restore"><Icon w={11} h={11}><Line d="M.5 3.500h7v7h-7zM3 3V.5h7.500V8H8" /></Icon></button>
          <button aria-label="Close window"><Cross size={11} /></button>
        </WindowButtons>
      </TitleBar>
      <MenuBar>
        {menus.map((name) => (
          <a key={name} href={`#${name}`}>
            <u>{name[0]}</u>
            {name.slice(1)}
          </a>
        ))}
      </MenuBar>
      <Body>
        <Rail>
          <RailButton aria-label="Welcome"><GridIcon size={19} /></RailButton>
          <RailButton aria-label="Edit">
            <Icon size={19} box={19}>
              <path fillRule="evenodd" d="M0 0h19v19H0zM4 4.500v1h11v-1zM4 7v1h9V7zM4 9.500v1h11v-1zM4 12v1h9v-1z" />
            </Icon>
          </RailButton>
          <RailButton aria-label="Design" $active $color="#c26a0a">
            <Icon size={20} box={20}><path d="M0 20l1.500-6L12 3.500 16.500 8 6 18.500zM13 2.500L15.500 0 20 4.500 17.500 7z" /></Icon>
          </RailButton>
          <RailButton aria-label="Debug"><Bug /></RailButton>
          <RailButton aria-label="Projects">
            <Icon size={20} box={20}>
              <path d="M1 16L9 8.500Q8 4 11 1.500 13.500-.5 16 .5L12.500 4l.5 3 3 .5L19.500 4q1 3-1 5.500-2.500 2.500-6.500 1.500L4 19q-1.500 1-3 0-1-1.500 0-3z" />
            </Icon>
          </RailButton>
          <RailButton aria-label="Help">
            <Icon size={20} box={20}>
              <circle cx="10" cy="10" r="10" />
              <text x="10" y="15.500" textAnchor="middle" fontSize="16" fontWeight="700" fill="#1a1a1a">?</text>
            </Icon>
          </RailButton>
          <hr />
          <RailButton aria-label="Target">
            <Icon w={35} h={24}>
              <path d="M6 0h22q1 0 1 1v16q0 1-1 1H6q-1 0-1-1V1q0-1 1-1zM14 19h6l3 5H11z" />
              <path d="M7 2h20v14H7z" fill="#444" />
              <path d="M32 9l3 3-3 3z" />
            </Icon>
          </RailButton>
          <RailButton aria-label="Run" $color="#8fba6b">
            <Icon w={18} h={22}><path d="M0 0l18 11L0 22z" /></Icon>
          </RailButton>
          <RailButton aria-label="Run with debugger" $color="#c4c4c4">
            <Icon w={20} h={24}>
              <path d="M0 0l18 11L0 22z" fill="#8fba6b" />
              <svg x="6" y="11" width="14" height="13" viewBox="0 0 20 20"><Bug /></svg>
            </Icon>
          </RailButton>
          <RailButton aria-label="Build project" $color="#6d6d6d">
            <Icon w={22} h={22}><path d="M0 19.500L12 8l2 2L2.500 21.500zM7 1h8l7 7-4 4-5.500-5.500-1-2.500z" /></Icon>
          </RailButton>
        </Rail>
        <Work>
          <MainToolbar />
          <Docks>
            <DockColumn>
              <Navigator />
              <Library />
            </DockColumn>
            <DockColumn>
              <FormEditor />
            </DockColumn>
            <DockColumn>
              <Properties />
              <Connections />
            </DockColumn>
          </Docks>
          <DockBar tabs={['Timeline', 'States']} active="States" lined />
          <StateList>
            <StateCell $active>
              <input aria-label="Base state name" defaultValue="base state" />
            </StateCell>
            {['State1', 'State2'].map((name) => (
              <StateCell key={name}>
                <input aria-label={`${name} name`} defaultValue={name} />
                <button aria-label={`Remove ${name}`}>
                  <Icon w={8} h={8}><Line sw={2} d="M.5.5l7 7M7.500.5l-7 7" /></Icon>
                </button>
              </StateCell>
            ))}
            <StateScroll />
          </StateList>
          <StatusBar>
            <ToolButton aria-label="Toggle left sidebar" $w={28} $color="#707070">
              <Icon w={11} h={11}><Line d="M.5.5h10v10H.5z" /><path d="M0 0h5v11H0z" /></Icon>
            </ToolButton>
            <Gap $w={4} />
            <Locator>
              <Icon w={15} h={14}>
                <circle cx="7.500" cy="5" r="4.200" fill="none" stroke="currentColor" strokeWidth="1.400" />
                <Line sw={2} d="M4.500 8.500L.5 12.500" />
                <path d="M10 11h5l-2.500 3z" />
              </Icon>
              <input placeholder="Type to locate (Ctrl+K)" aria-label="Type to locate" />
            </Locator>
            <Sep />
            {outputs.map(([n, name], i) => (
              <Output key={name} $gap={i === 0 ? 7 : 14}><b>{n}</b>{name}</Output>
            ))}
            <ToolButton aria-label="Output panes" $w={46}><UpDown /></ToolButton>
            <Spacer />
            <ToolButton aria-label="Progress" $on>
              <Icon w={14} h={12}><Line d="M.5 7.500h13v3H.5z" /><path d="M1 8h7v2H1zM11 1l2 2H9z" /></Icon>
            </ToolButton>
            <Gap $w={6} />
            <ToolButton aria-label="Toggle right sidebar" $color="#707070">
              <Icon w={11} h={11}><Line d="M.5.5h10v10H.5z" /><path d="M6 0h5v11H6z" /></Icon>
            </ToolButton>
          </StatusBar>
        </Work>
      </Body>
      <TaskEdge><span /></TaskEdge>
      <AnnotationDialog />
    </Page>
  );
}
